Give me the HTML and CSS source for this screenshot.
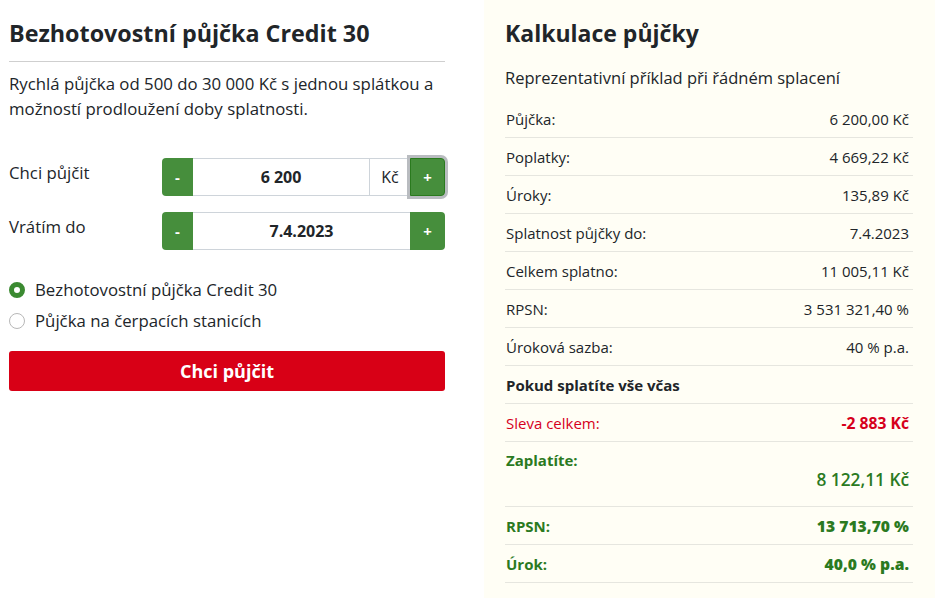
FILE: index.html
```html
<!DOCTYPE html>
<html lang="cs">
<head>
    <meta charset="UTF-8">
    <title>Bezhotovostní půjčka Credit 30</title>
    <link rel="stylesheet" href="styles.css">
</head>
<body>
    <div class="page">
        <div class="form-col">
            <h1>Bezhotovostní půjčka Credit 30</h1>
            <p class="lead">Rychlá půjčka od 500 do 30 000 Kč s jednou splátkou a možností prodloužení doby splatnosti.</p>

            <div class="field">
                <label>Chci půjčit</label>
                <div class="input-group">
                    <button class="step minus">-</button>
                    <div class="value">6 200</div>
                    <div class="addon">Kč</div>
                    <button class="step plus focused">+</button>
                </div>
            </div>
            <div class="field">
                <label>Vrátím do</label>
                <div class="input-group">
                    <button class="step minus">-</button>
                    <div class="value">7.4.2023</div>
                    <button class="step plus">+</button>
                </div>
            </div>

            <div class="radios">
                <label class="radio"><input type="radio" name="typ" checked> Bezhotovostní půjčka Credit 30</label>
                <label class="radio"><input type="radio" name="typ"> Půjčka na čerpacích stanicích</label>
            </div>

            <button class="submit">Chci půjčit</button>
        </div>

        <div class="calc-col">
            <h2>Kalkulace půjčky</h2>
            <p class="sub">Reprezentativní příklad při řádném splacení</p>
            <div class="table">
                <div class="row"><span>Půjčka:</span><span>6 200,00 Kč</span></div>
                <div class="row"><span>Poplatky:</span><span>4 669,22 Kč</span></div>
                <div class="row"><span>Úroky:</span><span>135,89 Kč</span></div>
                <div class="row"><span>Splatnost půjčky do:</span><span>7.4.2023</span></div>
                <div class="row"><span>Celkem splatno:</span><span>11 005,11 Kč</span></div>
                <div class="row"><span>RPSN:</span><span>3 531 321,40 %</span></div>
                <div class="row"><span>Úroková sazba:</span><span>40 % p.a.</span></div>
                <div class="row strong"><span>Pokud splatíte vše včas</span></div>
                <div class="row red"><span>Sleva celkem:</span><b>-2 883 Kč</b></div>
                <div class="row green total"><span>Zaplatíte:</span><span class="big">8 122,11 Kč</span></div>
                <div class="row green"><span>RPSN:</span><b>13 713,70 %</b></div>
                <div class="row green"><span>Úrok:</span><b>40,0 % p.a.</b></div>
            </div>
        </div>
    </div>
</body>
</html>
```

FILE: styles.css
```css
/* základ */
body {
    margin: 0;
    font-family: 'Open Sans', 'Noto Sans', sans-serif;
    color: #212529;
    background: #fff;
}

.page {
    display: flex;
    min-height: 598px;
}

/* levý sloupec s formulářem */
.form-col {
    width: 436px;
    padding: 16px 0 0 9px;
}

h1 {
    font-size: 23.3px;
    font-weight: 700;
    margin: 0;
    padding-bottom: 11px;
    border-bottom: 1px solid #cfcfcf;
    line-height: 34px;
}

.lead {
    font-size: 16.8px;
    line-height: 25px;
    margin: 9px 0 37px;
}

.field {
    display: flex;
    align-items: flex-start;
    margin-bottom: 16px;
}

.field label {
    width: 153px;
    font-size: 16.8px;
    line-height: 30px;
}

.input-group {
    flex: 1;
    display: flex;
    height: 38px;
}

.step {
    border: none;
    background: #468e3c;
    color: #fff;
    font-weight: 700;
    font-size: 15px;
    width: 31px;
    padding: 0;
    border-radius: 4px 0 0 4px;
    font-family: inherit;
}

.step.plus {
    width: 35px;
    border-radius: 0 4px 4px 0;
}

.step.focused {
    border: 1px solid #2a7a1e;
    box-shadow: 0 0 0 3px #b9bcc0;
}

.value {
    flex: 1;
    display: flex;
    align-items: center;
    justify-content: center;
    font-weight: 700;
    font-size: 16px;
    border-top: 1px solid #ced4da;
    border-bottom: 1px solid #ced4da;
}

.addon {
    width: 40px;
    display: flex;
    align-items: center;
    justify-content: center;
    font-size: 16px;
    border: 1px solid #ced4da;
    border-right: none;
}

.radios {
    margin-top: 24px;
}

.radio {
    display: flex;
    align-items: center;
    font-size: 16.8px;
    line-height: 31px;
}

.radio input {
    appearance: none;
    width: 16px;
    height: 16px;
    margin: 0 10px 0 0;
    border: 1px solid #b8b8b8;
    border-radius: 50%;
    background: #fff;
}

.radio input:checked {
    border: 5px solid #3b8a31;
}

.submit {
    width: 100%;
    height: 40px;
    margin-top: 15px;
    background: #d80016;
    color: #fff;
    border: none;
    border-radius: 3px;
    font-family: inherit;
    font-size: 18px;
    font-weight: 700;
}

/* pravý sloupec s kalkulací */
.calc-col {
    margin-left: 39px;
    flex: 1;
    background: #fffef5;
    padding: 16px 22px 0 21px;
}

h2 {
    font-size: 23px;
    font-weight: 700;
    margin: 0;
    line-height: 34px;
}

.sub {
    font-size: 16.5px;
    margin: 16px 0 10px;
    line-height: 24px;
}

.row {
    display: flex;
    justify-content: space-between;
    align-items: center;
    height: 37px;
    border-bottom: 1px solid #e6e6df;
    font-size: 15px;
    padding: 0 4px 0 1px;
}

.row b {
    font-size: 15.7px;
}

.row.strong {
    font-weight: 700;
}

.row.red {
    color: #d6001c;
}

.row.green {
    color: #2b7a1f;
    font-weight: 700;
}

.row.total {
    height: 65px;
    flex-direction: column;
    align-items: stretch;
    justify-content: flex-start;
    padding-top: 8px;
    box-sizing: border-box;
}

.row.total .big {
    text-align: right;
    font-size: 17.3px;
    font-weight: 600;
    line-height: 20px;
}
```
